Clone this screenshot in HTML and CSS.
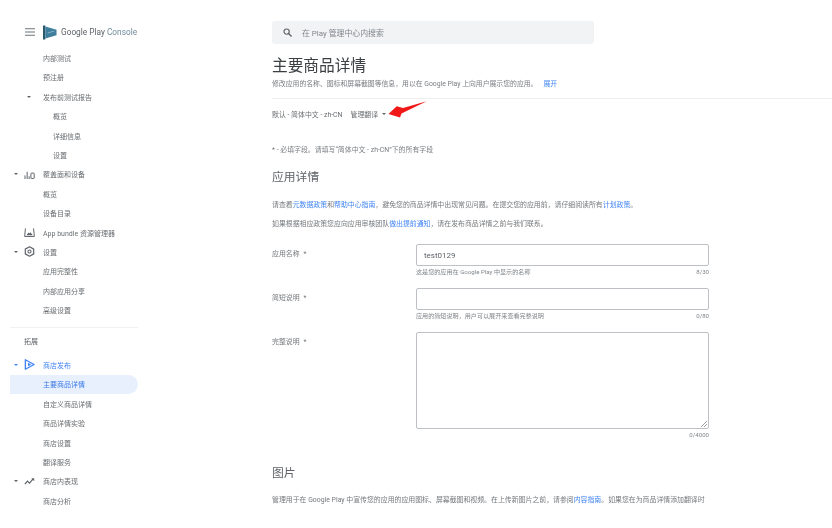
FILE: index.html
```html
<!DOCTYPE html>
<html lang="zh-CN">
<head>
<meta charset="utf-8">
<title>主要商品详情</title>
<link rel="stylesheet" href="styles.css">
</head>
<body>
<div class="app">
  <aside class="sidebar">
    <div class="brand">
      <svg class="burger" viewBox="0 0 10 8"><path d="M0 .7h10M0 4h10M0 7.3h10" stroke="#6f7478" stroke-width="1.100" fill="none"/></svg>
      <svg class="logo" viewBox="0 0 15 15"><path d="M0 0h2.500v15H0z" fill="#2c5870"/><path d="M2.500 1 14.500 4.500v6L2.500 14z" fill="#3f7f9d"/><path d="M5 8 12 6" stroke="#9cc2d2" stroke-width=".8"/></svg>
      <span class="brand-name">Google Play <span class="brand-accent">Console</span></span>
    </div>
    <nav class="nav">
      <div class="row"><span class="slot-a"></span><span class="slot-b"></span>内部测试</div>
      <div class="row"><span class="slot-a"></span><span class="slot-b"></span>预注册</div>
      <div class="row"><span class="slot-a"></span><span class="slot-b"><i class="caret"></i></span>发布前测试报告</div>
      <div class="row sub"><span class="slot-a"></span><span class="slot-b"></span>概览</div>
      <div class="row sub"><span class="slot-a"></span><span class="slot-b"></span>详细信息</div>
      <div class="row sub"><span class="slot-a"></span><span class="slot-b"></span>设置</div>
      <div class="row"><span class="slot-a"><i class="caret"></i></span><span class="slot-b"><svg class="ico" viewBox="0 0 12 10"><path d="M1 6v4M3.400 2v8M5.600 7v3" stroke="#5f6368" stroke-width="1.100" fill="none"/><rect x="7.600" y="3.500" width="3.600" height="6" rx=".6" stroke="#5f6368" stroke-width="1.100" fill="none"/></svg></span>覆盖面和设备</div>
      <div class="row"><span class="slot-a"></span><span class="slot-b"></span>概览</div>
      <div class="row"><span class="slot-a"></span><span class="slot-b"></span>设备目录</div>
      <div class="row"><span class="slot-a"></span><span class="slot-b"><svg class="ico" viewBox="0 0 12 10"><path d="M1.500 .5.600 9.400h10.800L10.500.5" stroke="#5f6368" stroke-width="1.100" fill="none"/><path d="M2.500 8 5 5l1 1 1-1.400L9.600 8z" fill="#5f6368"/></svg></span>App bundle 资源管理器</div>
      <div class="row"><span class="slot-a"><i class="caret"></i></span><span class="slot-b"><svg class="ico ico-tall" viewBox="0 0 12 12"><path d="M6 .8 10.600 3.400v5.200L6 11.200 1.400 8.600V3.400z" stroke="#5f6368" stroke-width="1.300" stroke-linejoin="round" fill="none"/><circle cx="6" cy="6" r="1.700" stroke="#5f6368" stroke-width="1.100" fill="none"/></svg></span>设置</div>
      <div class="row"><span class="slot-a"></span><span class="slot-b"></span>应用完整性</div>
      <div class="row"><span class="slot-a"></span><span class="slot-b"></span>内部应用分享</div>
      <div class="row"><span class="slot-a"></span><span class="slot-b"></span>高级设置</div>
    </nav>
    <div class="nav-divider"></div>
    <div class="nav-title">拓展</div>
    <nav class="nav">
      <div class="row blue"><span class="slot-a"><i class="caret"></i></span><span class="slot-b"><svg class="ico ico-tall" viewBox="0 0 12 12"><path d="M1.500 .8 11 6l-9.500 5.200z" stroke="#4285f4" stroke-width="1.500" stroke-linejoin="round" fill="none"/><path d="M4.300 4 8 6l-3.700 2z" fill="#4285f4"/></svg></span>商店发布</div>
      <div class="row active"><span class="slot-a"></span><span class="slot-b"></span>主要商品详情</div>
      <div class="row"><span class="slot-a"></span><span class="slot-b"></span>自定义商品详情</div>
      <div class="row"><span class="slot-a"></span><span class="slot-b"></span>商品详情实验</div>
      <div class="row"><span class="slot-a"></span><span class="slot-b"></span>商店设置</div>
      <div class="row"><span class="slot-a"></span><span class="slot-b"></span>翻译服务</div>
      <div class="row"><span class="slot-a"><i class="caret"></i></span><span class="slot-b"><svg class="ico" viewBox="0 0 12 10"><path d="M.8 8 3.800 4.600 6 6.800 9.800 2.400" stroke="#5f6368" stroke-width="1.300" fill="none"/><path d="M8 1.500h3.200v3.200z" fill="#5f6368"/></svg></span>商店内表现</div>
      <div class="row"><span class="slot-a"></span><span class="slot-b"></span>商店分析</div>
    </nav>
  </aside>
  <main class="content">
    <div class="search">
      <svg class="search-icon" viewBox="0 0 10 10"><circle cx="4" cy="4" r="2.900" stroke="#5f6368" stroke-width="1.300" fill="none"/><path d="M6.200 6.200 9.500 9.500" stroke="#5f6368" stroke-width="1.500"/></svg>
      <span>在 Play 管理中心内搜索</span>
    </div>
    <h1 class="title">主要商品详情</h1>
    <p class="subtitle">修改应用的名称、图标和屏幕截图等信息，用以在 Google Play 上向用户展示您的应用。<a class="link expand">展开</a></p>
    <div class="rule"></div>
    <div class="lang">
      <span>默认 - 简体中文 - zh-CN</span>
      <span class="manage">管理翻译</span>
      <i class="caret dark"></i>
      <svg class="arrow" viewBox="0 0 44 20"><path d="M42.700 1.300 19 8 12.700 6.300 4.500 14 16 17.500 17.500 13.500z" fill="#f01818"/></svg>
    </div>
    <p class="required">* - 必填字段。请填写“简体中文 - zh-CN”下的所有字段</p>
    <h2 class="section">应用详情</h2>
    <p class="para first">请查看<a class="link">元数据政策</a>和<a class="link">帮助中心指南</a>，避免您的商品详情中出现常见问题。在提交您的应用前，请仔细阅读所有<a class="link">计划政策</a>。</p>
    <p class="para second">如果根据相应政策您应向应用审核团队<a class="link">做出提前通知</a>，请在发布商品详情之前与我们联系。</p>
    <form class="form">
      <label class="label">应用名称<span class="mark">*</span></label>
      <div class="field">
        <div class="box input">test0129</div>
        <div class="hint"><span>这是您的应用在 Google Play 中显示的名称</span><span>8/30</span></div>
      </div>
      <label class="label">简短说明<span class="mark">*</span></label>
      <div class="field">
        <div class="box input"></div>
        <div class="hint"><span>应用的简短说明，用户可以展开来查看完整说明</span><span>0/80</span></div>
      </div>
      <label class="label">完整说明<span class="mark">*</span></label>
      <div class="field">
        <div class="box area"><svg class="grip" viewBox="0 0 6 6"><path d="M0 6 6 0M3 6l3-3" stroke="#8a8d90" stroke-width=".8"/></svg></div>
        <div class="hint end"><span>0/4000</span></div>
      </div>
    </form>
    <h2 class="section images">图片</h2>
    <p class="para last">管理用于在 Google Play 中宣传您的应用的应用图标、屏幕截图和视频。在上传新图片之前，请参阅<a class="link">内容指南</a>。如果您在为商品详情添加翻译时</p>
  </main>
</div>
</body>
</html>
```
FILE: styles.css
```css
* { box-sizing: border-box; }
html, body { margin: 0; padding: 0; background: #fff; }
body { font-family: Roboto, "Noto Sans CJK SC", sans-serif; color: #5f6368; }
.app {
  display: flex;
  width: 832px;
  height: 505px;
  overflow: hidden;
  background: #fff;
  filter: blur(0.45px);
}
.sidebar { width: 272px; flex: none; padding-left: 10px; }
.brand { display: flex; align-items: center; height: 48.300px; padding: 16px 0 0 15px; }
.burger { width: 10px; height: 8px; flex: none; }
.logo { width: 14px; height: 15px; flex: none; margin-left: 8px; }
.brand-name { margin-left: 4px; font-size: 8.300px; white-space: nowrap; color: #5f6368; }
.brand-accent { color: #6f8b99; }
.nav { width: 128px; }
.row { display: flex; align-items: center; height: 19.400px; font-size: 7px; white-space: nowrap; padding-left: 1px; color: #6a6e72; }
.slot-a { width: 9px; flex: none; display: flex; justify-content: center; }
.slot-b { width: 23px; flex: none; display: flex; align-items: center; padding-left: 4px; }
.row.sub .slot-b { width: 33px; }
.row .slot-b > .caret { margin-left: 3px; }
.caret { display: block; width: 0; height: 0; border: 2.200px solid transparent; border-top: 2.600px solid #5f6368; border-bottom: 0; }
.blue { color: #4285f4; }
.blue .caret { border-top-color: #4285f4; }
.active { background: #e8f0fe; color: #3b78e7; border-radius: 0 10px 10px 0; }
.ico { width: 11px; height: 9px; display: block; }
.ico-tall { width: 11px; height: 11px; }
.nav-divider { width: 128px; height: 1px; margin-top: 7.500px; background: #f1f1f1; }
.nav-title { height: 10px; margin: 9px 0 8px 14px; font-size: 7px; line-height: 10px; color: #5f6368; }
.content { flex: 1; min-width: 0; padding-top: 21px; }
.search { display: flex; align-items: center; width: 322px; height: 23px; padding-left: 11px; background: #f1f3f4; border-radius: 3px; font-size: 7.900px; color: #80868b; }
.search-icon { width: 9px; height: 9px; flex: none; margin-right: 10px; }
.title { margin: 12px 0 0; font-size: 15.700px; line-height: 20px; font-weight: 400; color: #3c4043; }
.subtitle { margin: 3px 0 0; font-size: 6.850px; line-height: 10px; white-space: nowrap; color: #7a7e82; }
.link { color: #4285f4; }
.expand { margin-left: 6px; }
.rule { height: 1px; margin-top: 9px; background: #eeeeee; }
.lang { position: relative; display: flex; align-items: center; height: 10px; margin-top: 10px; font-size: 6.900px; white-space: nowrap; color: #6a6e72; }
.manage { margin-left: 8px; }
.dark { margin-left: 4px; }
.arrow { position: absolute; left: 112px; top: -9px; width: 44px; height: 20px; }
.required { margin: 26px 0 0; font-size: 6.900px; line-height: 10px; color: #7a7e82; }
.section { margin: 14px 0 0; font-size: 11.800px; line-height: 16px; font-weight: 400; color: #5f6368; }
.images { margin-top: 26px; }
.para { margin: 0; font-size: 6.900px; line-height: 10px; white-space: nowrap; color: #75797d; }
.first { margin-top: 15px; }
.second { margin-top: 9px; }
.last { margin-top: 14px; }
.form { display: grid; grid-template-columns: 144px 293px; row-gap: 12px; margin-top: 15px; }
.label { padding-top: 5px; font-size: 6.900px; line-height: 10px; color: #75797d; }
.mark { margin-left: 4px; }
.box { border: 1px solid #bdc1c6; border-radius: 2px; background: #fff; }
.input { display: flex; align-items: center; height: 22px; padding-left: 7px; font-size: 8px; color: #5f6368; }
.area { position: relative; height: 97px; }
.grip { position: absolute; right: 1px; bottom: 1px; width: 6px; height: 6px; }
.hint { display: flex; justify-content: space-between; margin-top: 2px; font-size: 6.100px; line-height: 8px; white-space: nowrap; color: #80868b; }
.end { justify-content: flex-end; }
```
